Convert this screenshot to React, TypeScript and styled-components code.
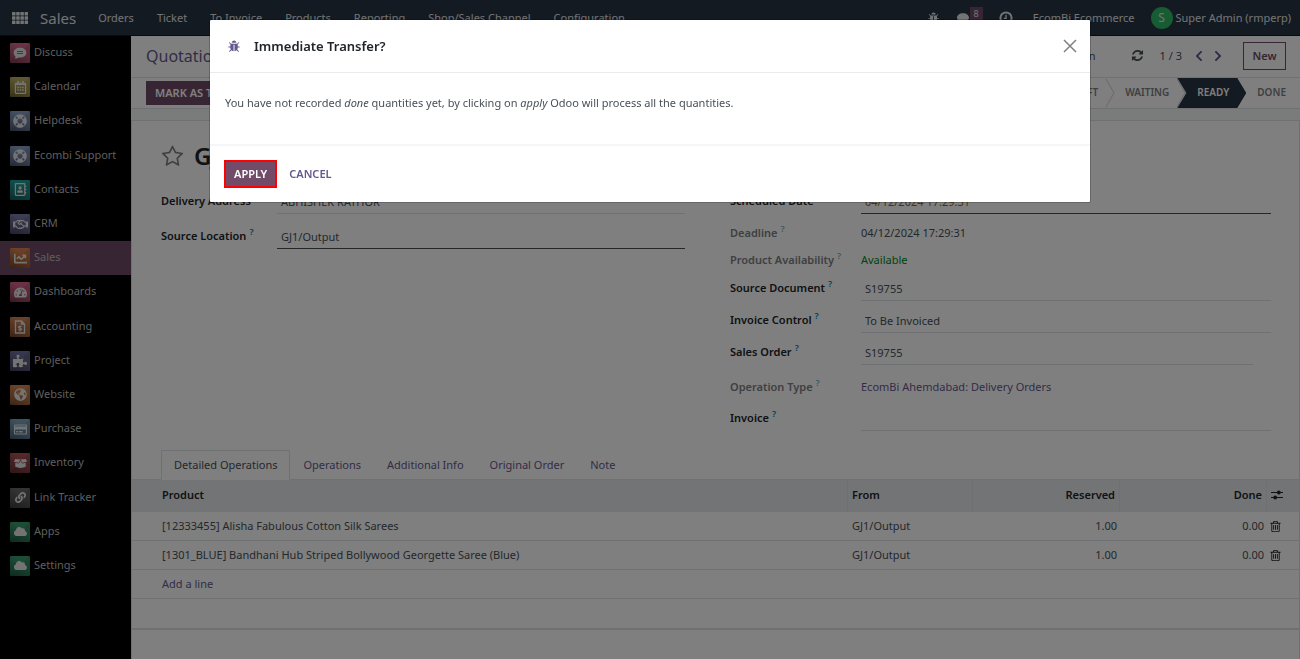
import React from "react";
import styled, { createGlobalStyle, css } from "styled-components";
import {
  FaBoxOpen,
  FaChartLine,
  FaChevronLeft,
  FaChevronRight,
  FaCloud,
  FaGlobeAmericas,
  FaLink,
  FaPuzzlePiece,
  FaRegAddressBook,
  FaRegCalendarAlt,
  FaRegCreditCard,
  FaRegHandshake,
  FaLifeRing,
  FaTachometerAlt,
} from "react-icons/fa";

const color = {
  navy: "#263442",
  plum: "#714b67",
  link: "#66598f",
  text: "#495057",
  heading: "#212529",
  muted: "#7c8084",
  line: "#dee0e4",
  head: "#e7e9ed",
  help: "#0180a5",
};

const GlobalStyle = createGlobalStyle`
  *, *::before, *::after { box-sizing: border-box; }
  body {
    margin: 0;
    background: #fff;
    color: ${color.text};
    font-family: "Noto Sans", "Open Sans", sans-serif;
    font-size: 11px;
    line-height: 16px;
    overflow: hidden;
  }
  button, input { font: inherit; color: inherit; }
  button { cursor: pointer; }
  a { color: inherit; text-decoration: none; }
  svg { display: block; flex: none; }
`;

/* ---------- icons ---------- */

const Fa4 = ({ d, size }: { d: string; size: number }) => (
  <svg width={size} height={size} viewBox="0 0 1792 1792" fill="currentColor" aria-hidden="true">
    <path d={d} />
  </svg>
);

const bugPath =
  "M1632 960q0 26-19 45t-45 19h-224q0 171-67 290l208 209q19 19 19 45t-19 45q-18 19-45 19t-45-19l-198-197q-5 5-15 13t-42 28.5-65 36.5-82 29-97 13v-896h-128v896q-51 0-101.5-13.5t-87-33-66-39-43.5-32.5l-15-14-183 207q-20 21-48 21-24 0-43-16-19-18-20.5-44.5t15.5-46.5l202-227q-58-114-58-274h-224q-26 0-45-19t-19-45 19-45 45-19h224v-294l-173-173q-19-19-19-45t19-45 45-19 45 19l173 173h844l173-173q19-19 45-19t45 19 19 45-19 45l-173 173v294h224q26 0 45 19t19 45zm-480-576h-640q0-133 93.5-226.5t226.5-93.5 226.5 93.5 93.5 226.5z";
const refreshPath =
  "M1639 1056q0 5-1 7-64 268-268 434.5t-478 166.5q-146 0-282.5-55t-243.5-157l-129 129q-19 19-45 19t-45-19-19-45v-448q0-26 19-45t45-19h448q26 0 45 19t19 45-19 45l-137 137q71 66 161 102t187 36q134 0 250-65t186-179q11-17 53-117 8-23 30-23h192q13 0 22.5 9.5t9.5 22.5zm25-800v448q0 26-19 45t-45 19h-448q-26 0-45-19t-19-45 19-45l138-138q-148-137-349-137-134 0-250 65t-186 179q-11 17-53 117-8 23-30 23h-199q-13 0-22.5-9.5t-9.500-22.500v-7q65-268 270-434.5t480-166.500q146 0 284 55.5t245 156.5l130-129q19-19 45-19t45 19 19 45z";
const trashPath =
  "M704 736v576q0 14-9 23t-23 9h-64q-14 0-23-9t-9-23v-576q0-14 9-23t23-9h64q14 0 23 9t9 23zm256 0v576q0 14-9 23t-23 9h-64q-14 0-23-9t-9-23v-576q0-14 9-23t23-9h64q14 0 23 9t9 23zm256 0v576q0 14-9 23t-23 9h-64q-14 0-23-9t-9-23v-576q0-14 9-23t23-9h64q14 0 23 9t9 23zm128 724v-948h-896v948q0 22 7 40.5t14.5 27 10.5 8.5h832q3 0 10.5-8.5t14.5-27 7-40.5zm-672-1076h448l-48-117q-7-9-17-11h-317q-10 2-17 11zm928 32v64q0 14-9 23t-23 9h-96v948q0 83-47 143.5t-113 60.5h-832q-66 0-113-58.5t-47-141.5v-952h-96q-14 0-23-9t-9-23v-64q0-14 9-23t23-9h309l70-167q15-37 54-63t79-26h320q40 0 79 26t54 63l70 167h309q14 0 23 9t9 23z";
const starPath =
  "M1201 1004l306-297-422-62-189-382-189 382-422 62 306 297-73 421 378-199 377 199zm527-357q0 22-26 48l-363 354 86 500q1 7 1 20 0 50-41 50-19 0-40-12l-449-236-449 236q-22 12-40 12-21 0-31.5-14.5t-10.5-35.5q0-6 2-20l86-500-364-354q-25-27-25-48 0-37 56-46l502-73 225-455q19-41 49-41t49 41l225 455 502 73q56 9 56 46z";

const AppsGrid = () => (
  <svg width="16" height="12" viewBox="0 0 16 12" fill="currentColor" aria-hidden="true">
    {[0, 1, 2].map((r) =>
      [0, 1, 2, 3].map((c) => (
        <rect key={`${r}${c}`} x={c * 4.2} y={r * 4.2} width="3.5" height="3.500" rx="0.500" />
      ))
    )}
  </svg>
);

const Bubble = () => (
  <svg width="14" height="14" viewBox="0 0 14 14" fill="currentColor" aria-hidden="true">
    <path d="M7 2.200c3.500 0 6 2 6 4.400s-2.500 4.400-6 4.400c-.5 0-1 0-1.400-.1C4.500 11.900 3.200 12.500 1.800 12.600c.6-.7 1-1.400 1.100-2.300C1.700 9.400 1 8.100 1 6.600c0-2.400 2.500-4.400 6-4.400z" />
  </svg>
);

const Clock = () => (
  <svg width="14" height="14" viewBox="0 0 14 14" fill="none" stroke="currentColor" strokeWidth="2" aria-hidden="true">
    <circle cx="7" cy="7" r="5.600" />
    <path d="M7 3.800v3.600H4.800" strokeWidth="1.300" />
  </svg>
);

const Sliders = () => (
  <svg width="12" height="10" viewBox="0 0 12 10" fill="currentColor" aria-hidden="true">
    <path d="M0 2h12v1H0zM0 7h12v1H0z" />
    <circle cx="7.800" cy="2.500" r="1.900" />
    <circle cx="4.200" cy="7.500" r="1.900" />
  </svg>
);

const DiscussGlyph = () => (
  <svg width="14" height="14" viewBox="0 0 14 14" aria-hidden="true">
    <path fill="currentColor" d="M7 1.800c3.600 0 6.300 2.100 6.300 4.900S10.600 11.500 7 11.500c-.5 0-1 0-1.400-.1-1.200.8-2.500 1.200-4 1.200.6-.7.9-1.400 1-2.200C1.400 9.500.7 8.200.7 6.700c0-2.800 2.700-4.900 6.300-4.900z" />
    <path stroke="#c34f77" strokeWidth="1" d="M4 5.500h6M4 7.500h6" />
  </svg>
);

const InvoiceGlyph = () => (
  <svg width="12" height="14" viewBox="0 0 12 14" fill="none" stroke="currentColor" aria-hidden="true">
    <path strokeWidth="1.300" d="M1.500 1h6l3 3v9h-9zM7.500 1v3h3" />
    <path strokeWidth="1.100" d="M7.700 6.700c-.5-.5-3.200-.8-3.200.5 0 1.300 3.200.7 3.200 2.100 0 1.200-2.700 1.100-3.300.4M6 5.500v6" />
  </svg>
);

/* ---------- top bar ---------- */

const Screen = styled.div`
  min-height: 100vh;
  display: flex;
  flex-direction: column;
`;

const Navbar = styled.nav`
  height: 36px;
  display: flex;
  align-items: center;
  padding: 0 9px 0 12px;
  background: ${color.navy};
  border-bottom: 1px solid #10161c;
  color: #e4e6e8;
`;

const Brand = styled.a`
  margin: 0 22px 0 12px;
  font-size: 15px;
`;

const NavMenu = styled.div`
  flex: 1;
  display: flex;
  gap: 23px;
`;

const Systray = styled.div`
  display: flex;
  align-items: center;
  gap: 16px;
`;

const IconButton = styled.button`
  display: flex;
  padding: 0;
  border: 0;
  background: none;
  color: inherit;
`;

const Messages = styled(IconButton)`
  align-items: center;
`;

const Activities = styled(IconButton)`
  margin-right: 4px;
`;

const Badge = styled.span`
  height: 14px;
  padding: 0 4px;
  margin-bottom: 8px;
  background: ${color.plum};
  font-size: 9px;
  line-height: 14px;
`;

const Account = styled.a`
  display: flex;
  align-items: center;
  gap: 3px;
`;

const Avatar = styled.span`
  width: 22px;
  height: 22px;
  border-radius: 50%;
  background: #2fb866;
  font-size: 12px;
  line-height: 22px;
  text-align: center;
`;

/* ---------- side bar ---------- */

const Body = styled.div`
  flex: 1;
  display: flex;
`;

const Sidebar = styled.aside`
  width: 131px;
  flex: none;
  background: #000;
`;

const AppList = styled.nav`
  display: grid;
  grid-auto-rows: 1fr;
  height: 547px;
`;

const AppLink = styled.a<{ $active?: boolean }>`
  display: flex;
  align-items: center;
  gap: 4px;
  padding: 0 10px;
  background: ${(p) => (p.$active ? color.plum : "transparent")};
  color: #bcbcbc;
`;

const AppName = styled.span`
  padding-bottom: 2px;
`;

const AppIcon = styled.span<{ $from: string; $to: string }>`
  width: 20px;
  height: 20px;
  display: flex;
  align-items: center;
  justify-content: center;
  border-radius: 1px;
  background: linear-gradient(135deg, transparent 50%, rgba(0, 0, 0, 0.08) 50%),
    linear-gradient(45deg, rgba(0, 0, 0, 0.3), transparent 60%),
    linear-gradient(${(p) => p.$from}, ${(p) => p.$to});
  color: #e6e6e6;
`;

/* ---------- control panel ---------- */

const Main = styled.main`
  flex: 1;
  min-width: 0;
  display: flex;
  flex-direction: column;
  background: #f5f6f7;
`;

const ControlRow = styled.div`
  height: 42px;
  display: flex;
  align-items: center;
  justify-content: space-between;
  padding: 0 14px 2px 15px;
  background: #fff;
  border-bottom: 1px solid ${color.line};
`;

const Crumb = styled.a`
  color: ${color.link};
  font-size: 16px;
`;

const Tools = styled.div`
  display: flex;
  align-items: center;
`;

const ActionButton = styled(IconButton)`
  margin-right: 35px;
`;

const Pager = styled.div`
  display: flex;
  align-items: center;
  gap: 7px;
  margin: 0 19px 0 16px;
  color: ${color.text};
`;

const PagerCount = styled.span`
  margin-right: 4px;
`;

const PagerButton = styled(IconButton)`
  color: ${color.link};
  stroke: currentColor;
  stroke-width: 50px;
`;

const NewButton = styled.button`
  height: 28px;
  width: 43px;
  padding: 0;
  border: 1px solid ${color.plum};
  background: transparent;
  color: ${color.plum};
  font-weight: 600;
`;

const StatusRow = styled.div`
  height: 31px;
  display: flex;
  align-items: center;
  justify-content: space-between;
  padding: 0 14px 0 15px;
  background: #fff;
  border-bottom: 1px solid ${color.line};
`;

const PrimaryButton = styled.button<{ $marked?: boolean }>`
  height: 24px;
  padding: 0 9px;
  border: 0;
  background: ${color.plum};
  color: #fff;
  font-weight: 600;
  text-transform: uppercase;
  ${(p) =>
    p.$marked &&
    css`
      height: 28px;
      padding: 0 8px;
      border: 2px solid #f00;
    `}
`;

const Steps = styled.ol`
  display: flex;
  height: 30px;
  margin: 0;
  padding: 0;
  list-style: none;
  font-size: 10px;
  line-height: 28px;
  font-weight: 600;
  text-transform: uppercase;
  color: ${color.muted};
`;

const Step = styled.li<{ $current?: boolean; $last?: boolean }>`
  display: flex;
  padding: 0 0 0 ${(p) => (p.$last ? "11px" : "10px")};
  ${(p) =>
    p.$current &&
    css`
      padding-left: 20px;
      margin-left: -9px;
      color: #fff;
      background: ${color.navy};
      clip-path: polygon(0 0, calc(100% - 9px) 0, 100% 50%, calc(100% - 9px) 100%, 0 100%, 9px 50%);
      padding-right: 17px;
    `}
`;

const StepArrow = () => (
  <svg width="17" height="30" viewBox="0 0 17 30" fill="none" stroke="#cfd2d6" aria-hidden="true">
    <path d="M8 1l8 14-8 14" />
  </svg>
);

/* ---------- form sheet ---------- */

const Sheet = styled.section`
  flex: 1;
  margin-top: 11px;
  border: 1px solid ${color.line};
  border-bottom: 0;
  background: #fff;
`;

const TitleRow = styled.div`
  height: 61px;
  display: flex;
  align-items: center;
  gap: 10px;
  padding: 9px 29px 0;
  color: ${color.muted};
`;

const Title = styled.h1`
  margin: 0;
  color: ${color.heading};
  font-size: 24px;
  font-weight: 600;
  line-height: 24px;
`;

const Columns = styled.div`
  display: grid;
  grid-template-columns: 524fr 541fr;
  gap: 45px;
  padding: 0 28px 19px 29px;
`;

type RowKind = "edit" | "read" | "link";

const FieldRow = styled.div<{ $label: number; $kind: RowKind; $gap?: number }>`
  display: grid;
  grid-template-columns: ${(p) => p.$label}px 1fr;
  height: ${(p) => ({ edit: 32, read: 27, link: 34 }[p.$kind])}px;
  padding-top: ${(p) => ({ edit: 8, read: 10, link: 14 }[p.$kind])}px;
  margin-bottom: ${(p) => p.$gap ?? 0}px;
`;

const Label = styled.label<{ $muted?: boolean }>`
  height: 22px;
  line-height: 22px;
  margin-top: ${(p) => (p.$muted ? -3 : 0)}px;
  color: ${(p) => (p.$muted ? color.muted : color.heading)};
  font-weight: 600;
  white-space: nowrap;
`;

const Help = styled.sup<{ $muted?: boolean }>`
  margin-left: 3px;
  color: ${color.help};
  opacity: ${(p) => (p.$muted ? 0.6 : 1)};
  font-size: 9px;
  line-height: 0;
`;

const Field = styled.input<{ $line?: string; $ink?: string; $short?: boolean }>`
  width: ${(p) => (p.$short ? "calc(100% - 18px)" : "100%")};
  height: 24px;
  padding: 0 4px;
  border: 0;
  border-bottom: 1px solid ${(p) => p.$line ?? color.line};
  outline: 0;
  background: transparent;
  color: ${(p) => p.$ink ?? color.text};
`;

const Value = styled.output<{ $ink?: string }>`
  color: ${(p) => p.$ink ?? color.text};
`;

const ValueLink = styled.a`
  color: ${color.link};
`;

/* ---------- notebook ---------- */

const TabBar = styled.div`
  display: flex;
  height: 30px;
  padding: 0 29px;
  margin-bottom: -1px;
  position: relative;
`;

const Tab = styled.button<{ $active?: boolean }>`
  padding: 0 12px;
  border: 1px solid ${(p) => (p.$active ? color.line : "transparent")};
  border-bottom-color: ${(p) => (p.$active ? "#fff" : "transparent")};
  background: ${(p) => (p.$active ? "#fff" : "transparent")};
  color: ${(p) => (p.$active ? color.text : color.link)};
`;

const Lines = styled.table`
  width: 100%;
  table-layout: fixed;
  border-collapse: separate;
  border-spacing: 0;
`;

const HeadCell = styled.th<{ $right?: boolean; $first?: boolean }>`
  height: 33px;
  padding: 0 4px 2px ${(p) => (p.$first ? 30 : 4)}px;
  border-top: 1px solid ${color.line};
  border-right: 1px solid ${color.line};
  background: ${color.head};
  color: ${color.heading};
  font-weight: 600;
  text-align: ${(p) => (p.$right ? "right" : "left")};
  &:last-child { border-right: 0; }
`;

const Cell = styled.td<{ $right?: boolean; $first?: boolean }>`
  height: 29px;
  padding: 0 3px 0 ${(p) => (p.$first ? 30 : 4)}px;
  border-bottom: 1px solid ${color.line};
  text-align: ${(p) => (p.$right ? "right" : "left")};
`;

const ToolCell = styled(Cell)`
  padding-left: 2px;
  color: ${color.heading};
`;

const FootCell = styled.td`
  height: 31px;
  border-bottom: 2px solid ${color.line};
`;

const AddLine = styled.a`
  color: ${color.link};
`;

/* ---------- dialog ---------- */

const Backdrop = styled.div`
  position: fixed;
  inset: 0;
  padding: 20px;
  background: rgba(0, 0, 0, 0.5);
`;

const Dialog = styled.div`
  max-width: 880px;
  margin: 0 auto;
  background: #fff;
  border-radius: 1px;
  box-shadow: 0 0 0 1px rgba(0, 0, 0, 0.2);
`;

const DialogHeader = styled.header`
  height: 53px;
  display: flex;
  align-items: center;
  gap: 13px;
  padding: 0 13px 0 18px;
  border-bottom: 1px solid #e9ecef;
  color: ${color.link};
`;

const DialogTitle = styled.h2`
  flex: 1;
  margin: 0;
  color: ${color.heading};
  font-size: 13px;
  font-weight: 600;
`;

const CloseButton = styled(IconButton)`
  color: #808080;
`;

const DialogBody = styled.div`
  height: 71px;
  padding: 22px 15px;
`;

const DialogFooter = styled.footer`
  height: 58px;
  display: flex;
  align-items: center;
  gap: 12px;
  padding: 0 14px 1px;
  border-top: 2px solid #f5f6f7;
`;

const PlainButton = styled.button`
  padding: 0;
  border: 0;
  background: none;
  color: ${color.link};
  font-weight: 600;
  text-transform: uppercase;
`;

/* ---------- data ---------- */

const menu = ["Orders", "Ticket", "To Invoice", "Products", "Reporting", "Shop/Sales Channel", "Configuration"];

const apps: { name: string; from: string; to: string; icon: React.ReactNode }[] = [
  { name: "Discuss", from: "#d8688c", to: "#b8587c", icon: <DiscussGlyph /> },
  { name: "Calendar", from: "#c0b064", to: "#a4964e", icon: <FaRegCalendarAlt size={13} /> },
  { name: "Helpdesk", from: "#8ca0c8", to: "#6c80a4", icon: <FaLifeRing size={14} /> },
  { name: "Ecombi Support", from: "#8ca0c8", to: "#6c80a4", icon: <FaLifeRing size={14} /> },
  { name: "Contacts", from: "#24a09c", to: "#1a8884", icon: <FaRegAddressBook size={13} /> },
  { name: "CRM", from: "#7c7cac", to: "#64648c", icon: <FaRegHandshake size={15} /> },
  { name: "Sales", from: "#d88450", to: "#b46838", icon: <FaChartLine size={13} /> },
  { name: "Dashboards", from: "#d8688c", to: "#b05074", icon: <FaTachometerAlt size={13} /> },
  { name: "Accounting", from: "#d08454", to: "#b06c40", icon: <InvoiceGlyph /> },
  { name: "Project", from: "#70709c", to: "#606088", icon: <FaPuzzlePiece size={14} /> },
  { name: "Website", from: "#d88850", to: "#b87448", icon: <FaGlobeAmericas size={13} /> },
  { name: "Purchase", from: "#7ca4c0", to: "#648ca8", icon: <FaRegCreditCard size={13} /> },
  { name: "Inventory", from: "#a85458", to: "#904448", icon: <FaBoxOpen size={13} /> },
  { name: "Link Tracker", from: "#686868", to: "#585858", icon: <FaLink size={11} /> },
  { name: "Apps", from: "#3c9c70", to: "#308460", icon: <FaCloud size={13} /> },
  { name: "Settings", from: "#3c9c70", to: "#308460", icon: <FaCloud size={13} /> },
];

const lines = [
  { product: "[12333455] Alisha Fabulous Cotton Silk Sarees", from: "GJ1/Output", reserved: "1.00", done: "0.00" },
  {
    product: "[1301_BLUE] Bandhani Hub Striped Bollywood Georgette Saree (Blue)",
    from: "GJ1/Output",
    reserved: "1.00",
    done: "0.00",
  },
];

const tabs = ["Detailed Operations", "Operations", "Additional Info", "Original Order", "Note"];

type RowProps = {
  id: string;
  label: string;
  width: number;
  kind?: RowKind;
  muted?: boolean;
  help?: boolean;
  gap?: number;
  children: React.ReactNode;
};

const Row = ({ id, label, width, kind = "edit", muted, help, gap, children }: RowProps) => (
  <FieldRow $label={width} $kind={kind} $gap={gap}>
    <Label htmlFor={id} $muted={muted}>
      {label}
      {help && <Help $muted={muted}>?</Help>}
    </Label>
    {children}
  </FieldRow>
);

export default function App() {
  return (
    <>
      <GlobalStyle />
      <Screen>
        <Navbar>
          <IconButton aria-label="Applications">
            <AppsGrid />
          </IconButton>
          <Brand href="#sales">Sales</Brand>
          <NavMenu>
            {menu.map((item) => (
              <a key={item} href="#menu">
                {item}
              </a>
            ))}
          </NavMenu>
          <Systray>
            <IconButton aria-label="Debug">
              <Fa4 d={bugPath} size={12} />
            </IconButton>
            <Messages aria-label="Messages">
              <Bubble />
              <Badge>8</Badge>
            </Messages>
            <Activities aria-label="Activities">
              <Clock />
            </Activities>
            <a href="#company">EcomBi Ecommerce</a>
            <Account href="#account">
              <Avatar>S</Avatar>
              Super Admin (rmperp)
            </Account>
          </Systray>
        </Navbar>

        <Body>
          <Sidebar>
            <AppList>
              {apps.map((app) => (
                <AppLink key={app.name} href="#app" $active={app.name === "Sales"}>
                  <AppIcon $from={app.from} $to={app.to}>
                    {app.icon}
                  </AppIcon>
                  <AppName>{app.name}</AppName>
                </AppLink>
              ))}
            </AppList>
          </Sidebar>

          <Main>
            <ControlRow>
              <Crumb href="#quotations">Quotations</Crumb>
              <Tools>
                <ActionButton>Action</ActionButton>
                <IconButton aria-label="Refresh">
                  <Fa4 d={refreshPath} size={13} />
                </IconButton>
                <Pager>
                  <PagerCount>1 / 3</PagerCount>
                  <PagerButton aria-label="Previous">
                    <FaChevronLeft size={12} />
                  </PagerButton>
                  <PagerButton aria-label="Next">
                    <FaChevronRight size={12} />
                  </PagerButton>
                </Pager>
                <NewButton>New</NewButton>
              </Tools>
            </ControlRow>
            <StatusRow>
              <PrimaryButton>Mark as todo</PrimaryButton>
              <Steps>
                <Step>
                  Draft
                  <StepArrow />
                </Step>
                <Step>
                  Waiting
                  <StepArrow />
                </Step>
                <Step $current>Ready</Step>
                <Step $last>Done</Step>
              </Steps>
            </StatusRow>

            <Sheet>
              <TitleRow>
                <IconButton aria-label="Favourite">
                  <Fa4 d={starPath} size={23} />
                </IconButton>
                <Title>GJ1</Title>
              </TitleRow>
              <Columns>
                <div>
                  <Row id="address" label="Delivery Address" width={116} gap={3}>
                    <Field id="address" defaultValue="ABHISHEK RATHOR" />
                  </Row>
                  <Row id="location" label="Source Location" width={116} help>
                    <Field id="location" defaultValue="GJ1/Output" $line={color.text} />
                  </Row>
                </div>
                <div>
                  <Row id="scheduled" label="Scheduled Date" width={131} gap={1}>
                    <Field id="scheduled" defaultValue="04/12/2024 17:29:31" $line={color.text} $ink="#9a6b01" />
                  </Row>
                  <Row id="deadline" label="Deadline" width={131} kind="read" muted help>
                    <Value id="deadline">04/12/2024 17:29:31</Value>
                  </Row>
                  <Row id="availability" label="Product Availability" width={131} kind="read" muted help>
                    <Value id="availability" $ink="#008818">
                      Available
                    </Value>
                  </Row>
                  <Row id="source" label="Source Document" width={131} help>
                    <Field id="source" defaultValue="S19755" />
                  </Row>
                  <Row id="control" label="Invoice Control" width={131} help>
                    <Field id="control" defaultValue="To Be Invoiced" />
                  </Row>
                  <Row id="order" label="Sales Order" width={131} help>
                    <Field id="order" defaultValue="S19755" $short />
                  </Row>
                  <Row id="operation" label="Operation Type" width={131} kind="link" muted help>
                    <ValueLink id="operation" href="#operation-type">
                      EcomBi Ahemdabad: Delivery Orders
                    </ValueLink>
                  </Row>
                  <Row id="invoice" label="Invoice" width={131} help>
                    <Field id="invoice" defaultValue="" />
                  </Row>
                </div>
              </Columns>

              <TabBar role="tablist">
                {tabs.map((tab, i) => (
                  <Tab key={tab} role="tab" aria-selected={i === 0} $active={i === 0}>
                    {tab}
                  </Tab>
                ))}
              </TabBar>
              <Lines>
                <colgroup>
                  <col />
                  <col width="125" />
                  <col width="147" />
                  <col width="147" />
                  <col width="32" />
                </colgroup>
                <thead>
                  <tr>
                    <HeadCell $first>Product</HeadCell>
                    <HeadCell>From</HeadCell>
                    <HeadCell $right>Reserved</HeadCell>
                    <HeadCell $right>Done</HeadCell>
                    <HeadCell>
                      <IconButton aria-label="Optional columns">
                        <Sliders />
                      </IconButton>
                    </HeadCell>
                  </tr>
                </thead>
                <tbody>
                  {lines.map((line) => (
                    <tr key={line.product}>
                      <Cell $first>{line.product}</Cell>
                      <Cell>{line.from}</Cell>
                      <Cell $right>{line.reserved}</Cell>
                      <Cell $right>{line.done}</Cell>
                      <ToolCell>
                        <IconButton aria-label="Delete line">
                          <Fa4 d={trashPath} size={13} />
                        </IconButton>
                      </ToolCell>
                    </tr>
                  ))}
                  <tr>
                    <Cell $first colSpan={5}>
                      <AddLine href="#add">Add a line</AddLine>
                    </Cell>
                  </tr>
                  <tr>
                    <FootCell colSpan={5} />
                  </tr>
                </tbody>
              </Lines>
            </Sheet>
          </Main>
        </Body>
      </Screen>

      <Backdrop>
        <Dialog role="dialog" aria-modal="true" aria-labelledby="dialog-title">
          <DialogHeader>
            <IconButton aria-label="Debug view">
              <Fa4 d={bugPath} size={13} />
            </IconButton>
            <DialogTitle id="dialog-title">Immediate Transfer?</DialogTitle>
            <CloseButton aria-label="Close">
              <svg width="14" height="14" viewBox="0 0 14 14" stroke="currentColor" strokeWidth="1.500">
                <path d="M1 1l12 12M13 1L1 13" />
              </svg>
            </CloseButton>
          </DialogHeader>
          <DialogBody>
            You have not recorded <em>done</em> quantities yet, by clicking on <em>apply</em> Odoo will process all the
            quantities.
          </DialogBody>
          <DialogFooter>
            <PrimaryButton $marked>Apply</PrimaryButton>
            <PlainButton>Cancel</PlainButton>
          </DialogFooter>
        </Dialog>
      </Backdrop>
    </>
  );
}
